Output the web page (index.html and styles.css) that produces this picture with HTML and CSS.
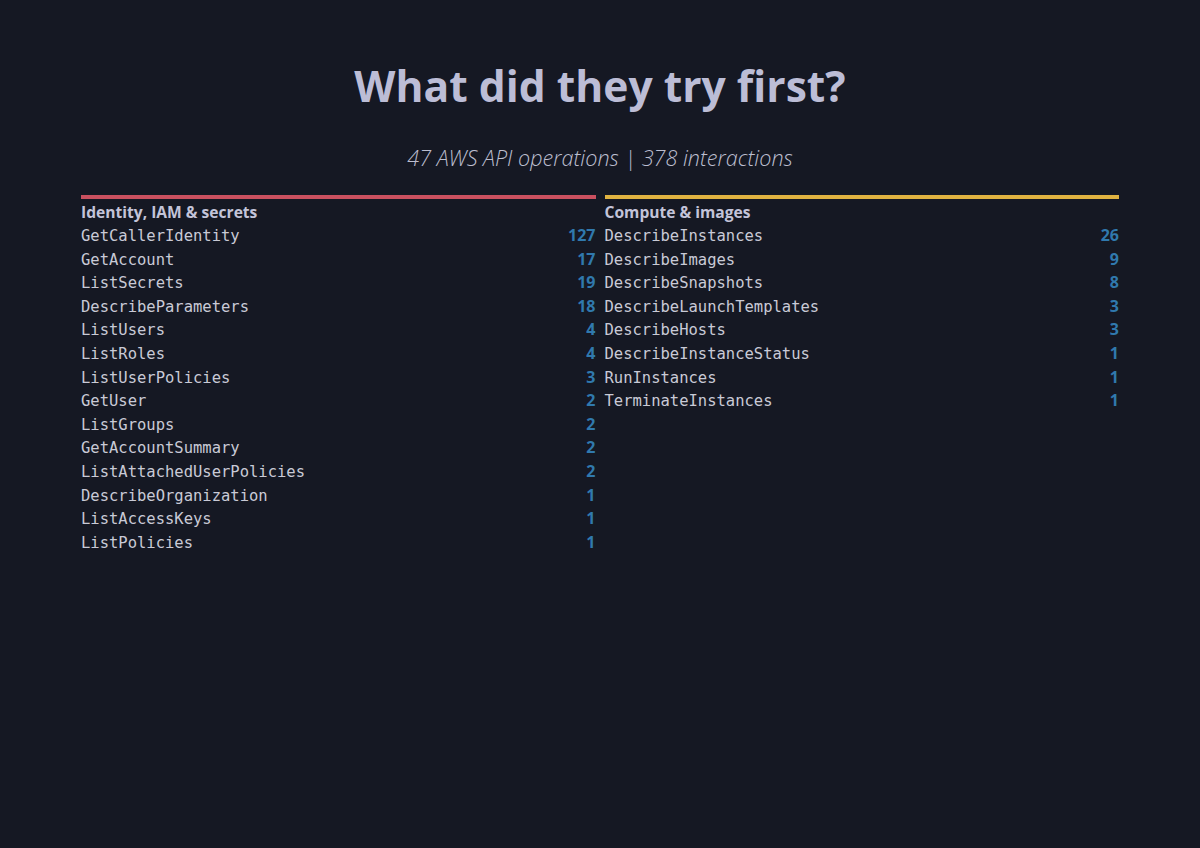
FILE: index.html
```html
<!DOCTYPE html>
<html>
<head>
<meta charset="utf-8">
<link rel="stylesheet" href="styles.css">
</head>
<body>
<main class="page">
  <h1 class="title">What did they try first?</h1>
  <p class="subtitle">47 AWS API operations | 378 interactions</p>
  <div class="columns">
    <section class="group group-red">
      <h2 class="group-title">Identity, IAM &amp; secrets</h2>
      <ul class="rows">
        <li class="row"><span class="op">GetCallerIdentity</span><span class="count">127</span></li>
        <li class="row"><span class="op">GetAccount</span><span class="count">17</span></li>
        <li class="row"><span class="op">ListSecrets</span><span class="count">19</span></li>
        <li class="row"><span class="op">DescribeParameters</span><span class="count">18</span></li>
        <li class="row"><span class="op">ListUsers</span><span class="count">4</span></li>
        <li class="row"><span class="op">ListRoles</span><span class="count">4</span></li>
        <li class="row"><span class="op">ListUserPolicies</span><span class="count">3</span></li>
        <li class="row"><span class="op">GetUser</span><span class="count">2</span></li>
        <li class="row"><span class="op">ListGroups</span><span class="count">2</span></li>
        <li class="row"><span class="op">GetAccountSummary</span><span class="count">2</span></li>
        <li class="row"><span class="op">ListAttachedUserPolicies</span><span class="count">2</span></li>
        <li class="row"><span class="op">DescribeOrganization</span><span class="count">1</span></li>
        <li class="row"><span class="op">ListAccessKeys</span><span class="count">1</span></li>
        <li class="row"><span class="op">ListPolicies</span><span class="count">1</span></li>
      </ul>
    </section>
    <section class="group group-yellow">
      <h2 class="group-title">Compute &amp; images</h2>
      <ul class="rows">
        <li class="row"><span class="op">DescribeInstances</span><span class="count">26</span></li>
        <li class="row"><span class="op">DescribeImages</span><span class="count">9</span></li>
        <li class="row"><span class="op">DescribeSnapshots</span><span class="count">8</span></li>
        <li class="row"><span class="op">DescribeLaunchTemplates</span><span class="count">3</span></li>
        <li class="row"><span class="op">DescribeHosts</span><span class="count">3</span></li>
        <li class="row"><span class="op">DescribeInstanceStatus</span><span class="count">1</span></li>
        <li class="row"><span class="op">RunInstances</span><span class="count">1</span></li>
        <li class="row"><span class="op">TerminateInstances</span><span class="count">1</span></li>
      </ul>
    </section>
  </div>
</main>
</body>
</html>
```

FILE: styles.css
```css
html, body {
  margin: 0;
  padding: 0;
  background: #151823;
  height: 100%;
}
.page {
  box-sizing: border-box;
  width: 1200px;
  min-height: 848px;
  padding: 58px 81px 0 81px;
  font-family: "Open Sans", "Liberation Sans", sans-serif;
}
.title {
  margin: 0;
  text-align: center;
  font-size: 42.6px;
  line-height: 54px;
  font-weight: 700;
  color: #bcbdd6;
}
.subtitle {
  margin: 32px 0 0 0;
  text-align: center;
  font-size: 21.6px;
  line-height: 28px;
  font-style: italic;
  font-weight: 300;
  color: #bcbecf;
}
.columns {
  display: grid;
  grid-template-columns: 1fr 1fr;
  column-gap: 9px;
  margin-top: 23px;
}
.group {
  border-top: 4px solid #c9505f;
  padding-top: 3px;
}
.group-yellow {
  border-top-color: #e0b341;
}
.group-title {
  margin: 0;
  font-size: 15.6px;
  line-height: 20px;
  font-weight: 700;
  color: #c3c4d9;
}
.rows {
  list-style: none;
  margin: 2px 0 0 0;
  padding: 0;
}
.row {
  display: flex;
  justify-content: space-between;
  align-items: baseline;
  height: 23.6px;
  line-height: 23.6px;
}
.op {
  font-family: "DejaVu Sans Mono", "Liberation Mono", monospace;
  font-size: 15.5px;
  color: #c9cad6;
}
.count {
  font-size: 16px;
  font-weight: 700;
  color: #3079ad;
}
```
